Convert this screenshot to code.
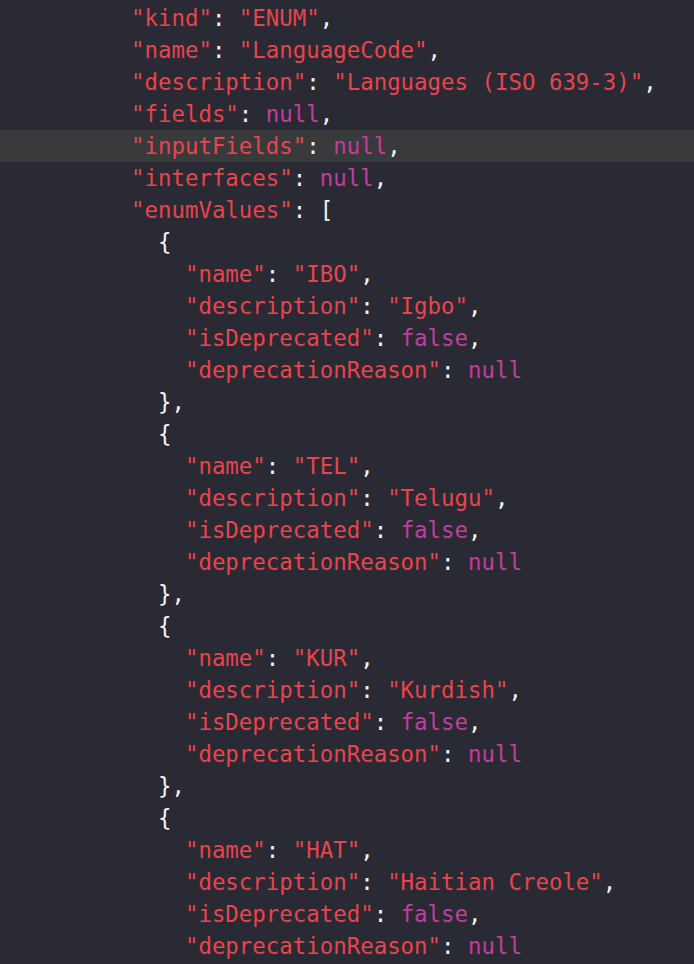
type Tok = { t: string; c: "s" | "p" | "k" };

const s = (t: string): Tok => ({ t, c: "s" });
const p = (t: string): Tok => ({ t, c: "p" });
const k = (t: string): Tok => ({ t, c: "k" });

const colors = {
  s: "text-[#e8444d]",
  p: "text-[#f2f2f2]",
  k: "text-[#c53b9d]",
};

function prop(key: string, value: Tok, last = false): Tok[] {
  return [s(`"${key}"`), p(": "), value, ...(last ? [] : [p(",")])];
}

const enums = [
  ["IBO", "Igbo"],
  ["TEL", "Telugu"],
  ["KUR", "Kurdish"],
  ["HAT", "Haitian Creole"],
];

const lines: { indent: number; toks: Tok[]; active?: boolean }[] = [
  { indent: 0, toks: prop("kind", s('"ENUM"')) },
  { indent: 0, toks: prop("name", s('"LanguageCode"')) },
  { indent: 0, toks: prop("description", s('"Languages (ISO 639-3)"')) },
  { indent: 0, toks: prop("fields", k("null")) },
  { indent: 0, toks: prop("inputFields", k("null")), active: true },
  { indent: 0, toks: prop("interfaces", k("null")) },
  { indent: 0, toks: [s('"enumValues"'), p(": [")] },
];

enums.forEach(([code, label], i) => {
  lines.push({ indent: 1, toks: [p("{")] });
  lines.push({ indent: 2, toks: prop("name", s(`"${code}"`)) });
  lines.push({ indent: 2, toks: prop("description", s(`"${label}"`)) });
  lines.push({ indent: 2, toks: prop("isDeprecated", k("false")) });
  lines.push({ indent: 2, toks: prop("deprecationReason", k("null"), true) });
  if (i < enums.length - 1) lines.push({ indent: 1, toks: [p("},")] });
});

export default function App() {
  return (
    <div className="w-[694px] h-[964px] overflow-hidden bg-[#292a33] pt-[2px] font-['DejaVu_Sans_Mono',monospace] text-[22.4px]">
      {lines.map((line, i) => (
        <div
          key={i}
          className={`h-[32px] leading-[32px] whitespace-pre pl-[131px] ${line.active ? "bg-[#393a3c]" : ""}`}
        >
          {"  ".repeat(line.indent)}
          {line.toks.map((tok, j) => (
            <span key={j} className={colors[tok.c]}>
              {tok.t}
            </span>
          ))}
        </div>
      ))}
    </div>
  );
}
